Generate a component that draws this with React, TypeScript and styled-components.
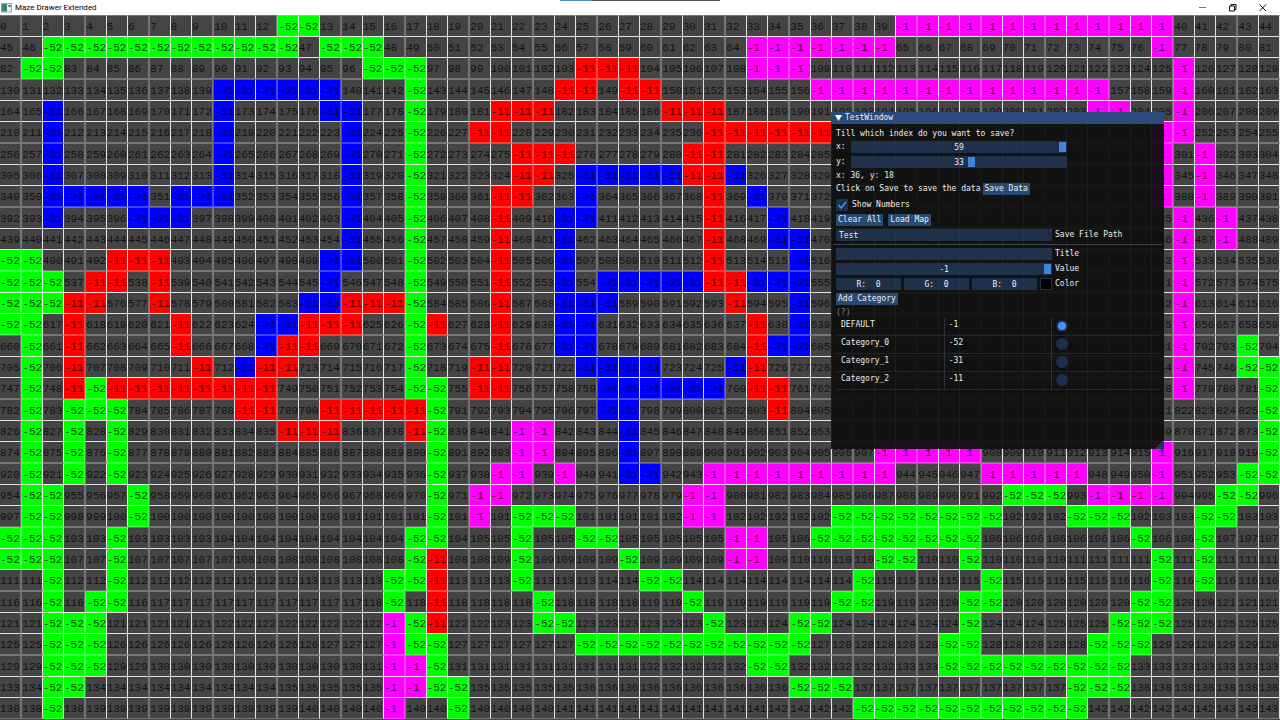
import React, { useState } from "react";
import styled, { createGlobalStyle, css } from "styled-components";

const GlobalStyle = createGlobalStyle`
  *, *::before, *::after { box-sizing: border-box; }
  html { background: #444; }
  body { margin: 0; overflow-x: hidden; }
`;

const mono = `"DejaVu Sans Mono", monospace`;

type Kind = "." | "G" | "B" | "R" | "M";

const fills: Record<Kind, string> = {
  ".": "#444444",
  G: "#00ff00",
  B: "#0000ff",
  R: "#ff0000",
  M: "#ff00ff",
};

const values: Record<Exclude<Kind, ".">, string> = {
  G: "-52",
  B: "-31",
  R: "-11",
  M: "-1",
};

/* Each row is run-length encoded: a count, then the kind of cell. */
const maze = [
  "13. 2G 15. 12. 3M 10M 5.",
  "2. 12G 1. 3G 12. 5. 7M 3. 9. 1M 5.",
  "1. 2G 12. 2. 3G 7. 3R 5. 3M 7. 10. 1M 4.",
  "10. 5B 1B 3. 1G 6. 2R 1. 1R 1R 7. 7M 7M 3. 1M 4.",
  "2. 1B 7. 1B 4. 2B 2. 1G 3. 3R 4. 1. 3R 11. 6. 2M 2. 1M 4.",
  "2. 1B 7. 1B 4. 1. 1B 2. 1G 2. 2R 6. 3. 6R 15. 2M 4.",
  "2. 1B 7. 1B 4. 1. 1B 2. 1G 4. 3R 3. 2. 2R 20. 1M 1. 1M 3.",
  "2. 1B 7. 1B 4. 1. 1B 2. 1G 4. 2R 1. 3B 2B 2R 1B 19. 1M 1. 1M 3.",
  "2. 5B 1. 3B 4. 1. 1B 2. 1G 3. 2R 2. 1B 2. 3. 1R 1. 1B 18. 1M 1. 1M 3.",
  "2. 1B 3. 3B 6. 1. 1B 2. 1G 3. 1R 2. 2B 2. 3. 1R 2. 1B 18. 1M 1. 1M 2.",
  "15. 1. 1B 2. 1G 3. 1R 2. 1B 3. 3. 1R 2. 2B 17. 1M 1. 1M 2.",
  "2G 3. 3R 7. 2B 2. 1G 3. 1R 2. 1B 3. 3. 1R 3. 1B 17. 1M 4.",
  "3G 1. 2R 1. 1R 7. 1B 3. 1G 3. 1R 2. 1B 1. 2B 3B 2R 3B 17. 1M 4.",
  "3G 2R 2. 1R 6. 1B 1B 3R 1G 3. 1R 2. 3B 1. 4. 1R 2. 1B 17. 1M 4.",
  "2G 1. 1R 4. 1R 3. 2B 1R 2R 2. 1G 1R 2. 1R 2. 2B 2. 5. 1R 1. 1B 17. 1M 4.",
  "1. 1G 1. 1R 4. 1R 3. 1B 2R 4. 1G 3. 1R 2. 2B 2. 5. 1R 2B 17. 1M 2. 1G 1.",
  "1. 1G 1. 1R 5. 1R 1. 1B 2R 1. 4. 1G 2. 2R 3. 3B 1B 3. 1B 1R 19. 1M 2. 2G",
  "1. 1G 1. 1R 1G 8R 2. 4. 2G 1. 2R 4. 2B 4B 1. 2R 18. 1M 3. 1G",
  "1. 1G 1. 3G 5. 2R 2. 5R 1G 7. 2B 6. 1R 22. 1G",
  "1. 1G 1. 1G 1. 1G 7. 2R 1R 3. 1R 1G 3. 2M 3. 1B 29. 1G",
  "1. 1G 1. 1G 1. 1G 9. 5. 1G 3. 2M 3. 1B 11. 4M 1M 8. 1M 4. 1G",
  "1. 1G 1. 1G 1. 1G 9. 5. 1G 2. 2M 1. 1M 2. 1B 1B 2. 9M 3. 1. 5M 3. 1M 3. 2G",
  "1. 2G 3. 1G 8. 5. 1G 1. 2M 6. 2. 2M 11. 2. 3G 1. 4M 2. 2G 1.",
  "1. 2G 3. 1G 8. 5. 1G 1. 1M 1. 3G 3. 2. 2M 5. 6G 2G 3. 3G 3. 2G 2.",
  "3G 2. 1G 9. 4. 2G 3. 1G 2. 2G 1. 4. 2M 2. 7G 1G 7. 1G 2. 1G 3.",
  "3G 2. 1G 9. 4. 1G 1R 3. 1G 4. 1G 4. 2M 5. 2G 2. 1G 8. 1G 1. 1G 3.",
  "2. 1G 2. 1G 9. 3. 2G 1R 3. 1G 5. 2G 8. 1G 4. 1. 1G 7. 1G 1. 1G 3.",
  "2. 1G 1. 2G 9. 3. 1G 1. 1R 4. 1G 4. 2. 1G 6. 2G 4. 2G 6. 2G 5.",
  "2. 3G 10. 3. 1M 1G 1R 4. 2G 3. 3. 1G 3. 2G 6. 1G 6. 3G 5.",
  "2. 3G 10. 3. 1M 2G 6. 3G 8G 6. 1G 1G 5. 3G 6.",
  "2. 3G 10. 3. 2M 1G 9. 5. 2G 7. 1G 8G 7.",
  "2. 2G 11. 3. 2M 2G 8. 7. 3G 5. 5. 3G 7.",
  "2. 1G 12. 3. 1M 2. 1G 8. 10. 5G 6G 9.",
];

/* Free cells carry a running index, cut to the three digits that fit. */
const board = (() => {
  let index = 0;
  return maze.map((line) =>
    line.split(" ").flatMap((run) => {
      const kind = run.slice(-1) as Kind;
      return Array.from({ length: parseInt(run, 10) }, () => ({
        kind,
        text: kind === "." ? String(index++).slice(0, 3) : values[kind],
      }));
    })
  );
})();

const Desktop = styled.div`
  position: relative;
  width: 100%;
`;

const Caption = styled.header`
  position: relative;
  display: flex;
  align-items: center;
  height: 15px;
  padding: 0 2px 0 1px;
  background: #fff;
  color: #000;
  font: 8px/14px Roboto, sans-serif;
`;

const CaptionTitle = styled.span`
  flex: 1;
  margin-left: 3px;
`;

const CaptionButton = styled.button`
  display: flex;
  align-items: center;
  justify-content: center;
  width: 30px;
  height: 13px;
  padding: 0;
  border: 0;
  background: none;
`;

const DragStrip = styled.i`
  position: absolute;
  top: 0;
  left: 50%;
  width: 160px;
  height: 1px;
  margin-left: -80px;
  background: linear-gradient(90deg, #4a8ac0 32px, #555 32px);
`;

const Board = styled.main`
  display: flex;
  flex-direction: column;
  aspect-ratio: 60 / 33;
`;

const BoardRow = styled.div`
  flex: 1;
  min-height: 0;
  display: grid;
  grid-template-columns: repeat(60, minmax(0, 1fr));
`;

const sharp = "rgba(255, 255, 255, 0.85)";
const soft = "rgba(255, 255, 255, 0.26)";

const rowEdges = [
  css`border-top: 1px solid ${soft};`,
  css`border-top: 1px solid ${sharp}; border-bottom: 1px solid ${sharp};`,
  css`border-bottom: 1px solid ${soft};`,
];
const columnEdges = [
  css`border-right: 1px solid ${soft};`,
  css`border-left: 1px solid ${soft}; border-right: 1px solid ${sharp};`,
  css`border-right: 1px solid ${sharp};`,
];

const Cell = styled.div<{ $kind: Kind; $row: number; $column: number }>`
  display: flex;
  align-items: center;
  overflow: hidden;
  padding-top: 2px;
  background: ${(p) => fills[p.$kind]};
  color: rgba(0, 0, 0, 0.75);
  font: 11px/18px "Liberation Mono", monospace;
  white-space: nowrap;
  ${(p) => rowEdges[p.$row]}
  ${(p) => columnEdges[p.$column]}
`;

const ToolWindow = styled.section`
  position: absolute;
  top: 112px;
  left: 831px;
  width: 333px;
  min-height: 337px;
  background: rgba(15, 15, 15, 0.94);
  color: #eee;
  font: 8px/10px ${mono};
`;

const ToolTitle = styled.h1`
  display: flex;
  align-items: center;
  gap: 3px;
  height: 12px;
  margin: 0;
  padding: 0 4px;
  background: #294a7a;
  font: inherit;
`;

const ToolBody = styled.div`
  padding: 5px 5px 0;
`;

const Line = styled.div<{ $height?: number; $gap?: number }>`
  display: flex;
  align-items: center;
  gap: ${(p) => p.$gap ?? 3}px;
  height: ${(p) => p.$height ?? 12}px;
  margin-bottom: 3px;
  white-space: nowrap;
`;

const Hint = styled.div`
  height: 10px;
  color: #808080;
`;

const Separator = styled.hr`
  height: 1px;
  margin: 0 -3px 3px;
  border: 0;
  background: rgba(110, 110, 128, 0.5);
`;

const Button = styled.button`
  height: 12px;
  padding: 0 2px;
  border: 0;
  background: #274a72;
  color: #eee;
  font: 8px/12px ${mono};
`;

const AxisName = styled.label`
  width: 12px;
`;

const Track = styled.div`
  position: relative;
  width: 216px;
  height: 12px;
`;

const Range = styled.input`
  display: block;
  appearance: none;
  width: 100%;
  height: 12px;
  margin: 0;
  padding: 1px;
  background: rgba(41, 74, 122, 0.54);

  &::-webkit-slider-thumb {
    appearance: none;
    width: 7px;
    height: 10px;
    background: #3d85e0;
  }
`;

const TrackValue = styled.output`
  position: absolute;
  inset: 0;
  line-height: 13px;
  text-align: center;
  pointer-events: none;
`;

const Field = styled.input`
  width: 216px;
  height: 12px;
  padding: 1px 3px 0;
  border: 0;
  background: rgba(41, 74, 122, 0.54);
  color: #eee;
  font: 8px/11px ${mono};
`;

const Channel = styled(Field)`
  width: 65px;
  text-align: center;
`;

const Channels = styled.div`
  display: flex;
  justify-content: space-between;
  width: 216px;
`;

const Swatch = styled.button`
  width: 12px;
  height: 12px;
  padding: 0;
  border: 1px solid #26313f;
  background: #000;
`;

const CheckLabel = styled.label`
  display: flex;
  align-items: center;
  gap: 4px;
`;

const Check = styled.input`
  appearance: none;
  width: 12px;
  height: 12px;
  margin: 0;
  background: rgba(41, 74, 122, 0.54);
`;

const CheckBox = styled.span`
  position: relative;
  display: flex;

  svg {
    position: absolute;
    inset: 0;
    pointer-events: none;
  }
`;

const Categories = styled.table`
  width: 323px;
  border-spacing: 0;
  table-layout: fixed;
`;

const CategoryCell = styled.td`
  height: 18px;
  padding: 2px 5px 0;
  border-bottom: 1px solid #262628;
  vertical-align: top;

  & + & {
    padding-left: 4px;
    border-left: 1px solid #303034;
  }
`;

const Radio = styled.input`
  appearance: none;
  display: block;
  width: 12px;
  height: 12px;
  margin: 0;
  border: 2px solid #1d2f4d;
  border-radius: 50%;
  background: #1d2f4d;

  &:checked {
    background: #4296fa;
  }
`;

const Grip = styled.i`
  position: absolute;
  right: 0;
  bottom: 0;
  width: 9px;
  height: 9px;
  background: linear-gradient(135deg, transparent 50%, #2a3050 50%);
`;

const categories = [
  { name: "DEFAULT", value: -1 },
  { name: "Category_0", value: -52 },
  { name: "Category_1", value: -31 },
  { name: "Category_2", value: -11 },
];

function Slider(props: { id: string; min: number; max: number; initial: number }) {
  const [value, setValue] = useState(props.initial);
  return (
    <Track>
      <Range
        id={props.id}
        type="range"
        min={props.min}
        max={props.max}
        value={value}
        onChange={(e) => setValue(Number(e.target.value))}
      />
      <TrackValue htmlFor={props.id}>{value}</TrackValue>
    </Track>
  );
}

function TestWindow(props: { numbers: boolean; onNumbers: (on: boolean) => void }) {
  const [picked, setPicked] = useState("DEFAULT");
  return (
    <ToolWindow>
      <ToolTitle>
        <svg width="7" height="6" viewBox="0 0 7 6" aria-hidden="true">
          <path d="M0 0h7L3.5 6z" fill="#fff" />
        </svg>
        TestWindow
      </ToolTitle>
      <ToolBody>
        <Line $height={9}>Till which index do you want to save?</Line>
        <Line>
          <AxisName htmlFor="x">x:</AxisName>
          <Slider id="x" min={0} max={59} initial={59} />
        </Line>
        <Line>
          <AxisName htmlFor="y">y:</AxisName>
          <Slider id="y" min={0} max={59} initial={33} />
        </Line>
        <Line $height={9}>x: 36, y: 18</Line>
        <Line $gap={2}>
          <span>Click on Save to save the data</span>
          <Button>Save Data</Button>
        </Line>
        <Line $height={13}>
          <CheckLabel>
            <CheckBox>
              <Check
                type="checkbox"
                checked={props.numbers}
                onChange={(e) => props.onNumbers(e.target.checked)}
              />
              {props.numbers && (
                <svg width="12" height="12" viewBox="0 0 12 12" aria-hidden="true">
                  <path d="M2.5 6l2.5 3 5-6" fill="none" stroke="#4296fa" strokeWidth="1.5" />
                </svg>
              )}
            </CheckBox>
            Show Numbers
          </CheckLabel>
        </Line>
        <Line $gap={5}>
          <Button>Clear All</Button>
          <Button>Load Map</Button>
        </Line>
        <Line>
          <Field id="path" defaultValue="Test" />
          <label htmlFor="path">Save File Path</label>
        </Line>
        <Separator />
        <Line>
          <Field id="title" />
          <label htmlFor="title">Title</label>
        </Line>
        <Line>
          <Slider id="value" min={-100} max={-1} initial={-1} />
          <label htmlFor="value">Value</label>
        </Line>
        <Line>
          <Channels>
            <Channel aria-label="Red" defaultValue="R:  0" />
            <Channel aria-label="Green" defaultValue="G:  0" />
            <Channel aria-label="Blue" defaultValue="B:  0" />
            <Swatch id="color" />
          </Channels>
          <label htmlFor="color">Color</label>
        </Line>
        <Line>
          <Button>Add Category</Button>
        </Line>
        <Hint>(?)</Hint>
        <Categories>
          <tbody>
            {categories.map((c) => (
              <tr key={c.name}>
                <CategoryCell>{c.name}</CategoryCell>
                <CategoryCell>{c.value}</CategoryCell>
                <CategoryCell>
                  <Radio
                    type="radio"
                    name="category"
                    aria-label={c.name}
                    checked={picked === c.name}
                    onChange={() => setPicked(c.name)}
                  />
                </CategoryCell>
              </tr>
            ))}
          </tbody>
        </Categories>
      </ToolBody>
      <Grip />
    </ToolWindow>
  );
}

export default function App() {
  const [numbers, setNumbers] = useState(true);
  return (
    <Desktop>
      <GlobalStyle />
      <Caption>
        <svg width="11" height="10" viewBox="0 0 11 10" aria-hidden="true">
          <rect x="0.5" y="0.5" width="10" height="8.5" fill="#e8eeee" stroke="#9aa5a8" />
          <rect x="1" y="1" width="5" height="7.5" fill="#3d7f78" />
          <rect x="7.5" y="2" width="2" height="2" fill="#49657e" />
        </svg>
        <CaptionTitle>Maze Drawer Extended</CaptionTitle>
        <CaptionButton aria-label="Minimize">
          <svg width="8" height="8" viewBox="0 0 8 8">
            <path d="M0 3.5h7" stroke="#777" />
          </svg>
        </CaptionButton>
        <CaptionButton aria-label="Restore">
          <svg width="8" height="8" viewBox="0 0 8 8" fill="none" stroke="#111">
            <path d="M0.5 2h5v5h-5zM2 2v-1.500h5v5h-1.500" />
          </svg>
        </CaptionButton>
        <CaptionButton aria-label="Close">
          <svg width="8" height="8" viewBox="0 0 8 8">
            <path d="M0.5 0.5l6.500 6.500M7 0.5l-6.500 6.500" stroke="#111" />
          </svg>
        </CaptionButton>
        <DragStrip />
      </Caption>
      <Board>
        {board.map((cells, row) => (
          <BoardRow key={row}>
            {cells.map((cell, column) => (
              <Cell key={column} $kind={cell.kind} $row={row % 3} $column={column % 3}>
                {numbers && cell.text}
              </Cell>
            ))}
          </BoardRow>
        ))}
      </Board>
      <TestWindow numbers={numbers} onNumbers={setNumbers} />
    </Desktop>
  );
}
